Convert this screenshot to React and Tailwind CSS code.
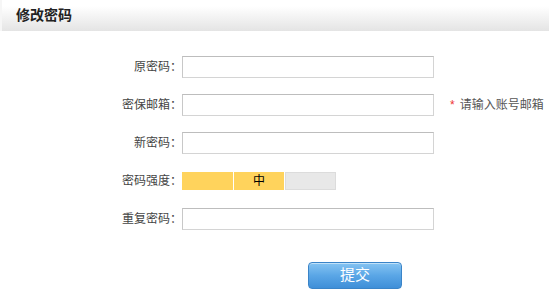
export default function App() {
  const font = { fontFamily: '"Liberation Sans", "Noto Sans CJK SC", sans-serif' };
  const Row = ({ label, children }) => (
    <div className="flex items-center h-[22px]">
      <div className="w-[182px] shrink-0 text-right text-[12px] text-[#444] leading-[22px]">{label}</div>
      {children}
    </div>
  );
  const Input = () => (
    <input
      className="w-[252px] h-[22px] border border-[#d4d4d4] border-t-[#bdbdbd] border-l-[#c8c8c8] bg-white outline-none text-[12px] px-1"
      type="text"
    />
  );
  return (
    <div className="w-[549px] h-[295px] bg-white overflow-hidden" style={font}>
      <div className="h-[31px] bg-gradient-to-b from-[#ffffff] from-20% to-[#e4e4e4] border-l-2 border-l-[#f6f6f6] flex items-center pl-[14px]">
        <span className="text-[14px] font-bold text-[#222]">修改密码</span>
      </div>
      <div className="flex flex-col gap-[16px] pt-[25px]">
        <Row label="原密码：">
          <Input />
        </Row>
        <Row label="密保邮箱：">
          <Input />
          <span className="ml-[16px] text-[12px] text-[#e33] leading-none">*</span>
          <span className="ml-[5px] text-[12px] text-[#555]">请输入账号邮箱</span>
        </Row>
        <Row label="新密码：">
          <Input />
        </Row>
        <Row label="密码强度：">
          <div className="flex h-[18px] w-[154px] gap-px">
            <div className="w-[51px] bg-[#ffd35c]" />
            <div className="w-[50px] bg-[#ffd35c] flex items-center justify-center text-[12px] text-black">中</div>
            <div className="w-[51px] bg-[#e8e8e8] border border-[#dcdcdc]" />
          </div>
        </Row>
        <Row label="重复密码：">
          <Input />
        </Row>
      </div>
      <div className="pl-[308px] pt-[32px]">
        <button className="w-[94px] h-[27px] rounded-[4px] border border-[#3a84c8] bg-gradient-to-b from-[#85c4f2] via-[#5aa6e6] to-[#3f8fd8] text-white text-[15px] flex items-center justify-center shadow-[inset_0_1px_0_rgba(255,255,255,0.5)]">
          提交
        </button>
      </div>
    </div>
  );
}
